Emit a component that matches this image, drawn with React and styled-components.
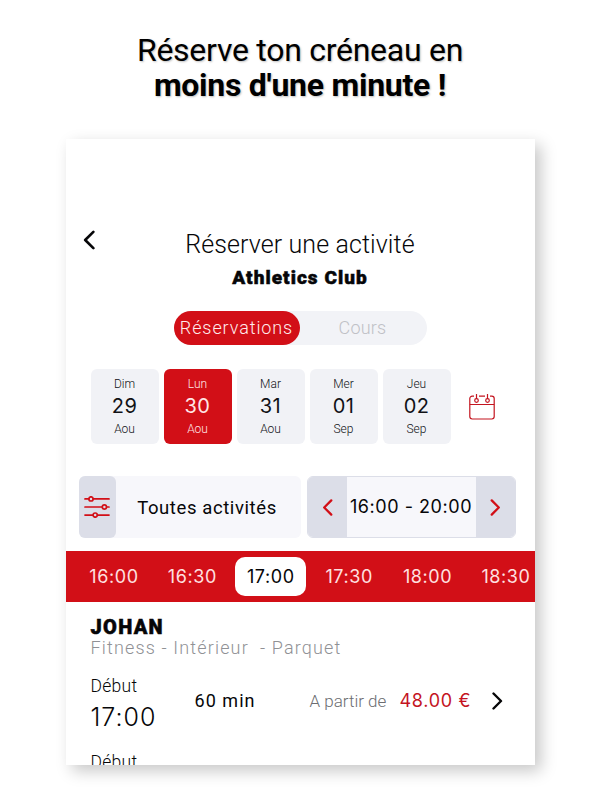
import { useState } from 'react'
import styled, { createGlobalStyle } from 'styled-components'

const GlobalStyle = createGlobalStyle`
    * {
        box-sizing: border-box;
    }

    body {
        margin: 0;
        background: #fff;
        color: #060608;
        font-family: Roboto, "Liberation Sans", sans-serif;
    }

    button {
        padding: 0;
        border: none;
        background: none;
        font: inherit;
        color: inherit;
    }
`

const Page = styled.div`
    width: 600px;
    height: 800px;
    overflow: hidden;

    display: flex;
    flex-direction: column;
    align-items: center;
`

const Slogan = styled.h1`
    height: 139px;
    margin: 0;
    padding-top: 32px;

    font-size: 32px;
    font-weight: 400;
    line-height: 36px;
    letter-spacing: -0.27px;
    text-align: center;
    white-space: nowrap;
    color: #000;
    text-shadow: 1px 1px 2px rgba(0, 0, 0, 0.25);
`

const SloganStrong = styled.strong`
    display: block;
    font-weight: 700;
    line-height: 35px;
`

const Screen = styled.main`
    width: 469px;
    height: 626px;
    overflow: hidden;

    display: flex;
    flex-direction: column;

    background: #fff;
    box-shadow: 6px 6px 15px rgba(0, 0, 0, 0.22);
`

const Header = styled.header`
    height: 172px;
    flex: none;
    padding-top: 90px;

    display: grid;
    grid-template-columns: 47px 1fr 47px;
    align-items: start;
    justify-items: center;
`

const BackButton = styled.button`
    height: 22px;
    display: flex;
    align-items: center;
`

const Titles = styled.div`
    display: flex;
    flex-direction: column;
    align-items: center;
    white-space: nowrap;
`

const Label = styled.span`
    font-family: ${p => (p.$digits ? 'Inter, ' : '')}Roboto, sans-serif;
    font-size: ${p => p.$size}px;
    font-weight: ${p => p.$weight || 400};
    line-height: ${p => p.$line || 20}px;
    letter-spacing: ${p => p.$track || 0}px;
    color: ${p => p.$color || 'inherit'};
    -webkit-text-stroke: ${p => (p.$weight === 900 ? '0.5px' : '0')};
    white-space: pre;
`

const Toggle = styled.div`
    width: 253px;
    height: 34px;
    flex: none;
    align-self: center;

    display: flex;

    border-radius: 17px;
    background: #f2f3f7;
`

const ToggleOption = styled.button`
    width: 126px;
    height: 34px;

    border-radius: 17px;
    background: ${p => (p.$active ? '#d20f17' : 'transparent')};
    color: ${p => (p.$active ? '#ffecec' : '#c0c1c6')};
`

const Days = styled.div`
    height: 75px;
    flex: none;
    margin-top: 24px;
    padding-left: 25px;

    display: flex;
    align-items: center;
    gap: 5px;
`

const Day = styled.button`
    width: 68px;
    height: 75px;
    padding-top: 5px;

    display: flex;
    flex-direction: column;
    align-items: center;

    border-radius: 6px;
    background: ${p => (p.$active ? '#d20f17' : '#f1f2f6')};
    color: ${p => (p.$active ? '#ffe6e6' : '#111216')};
`

const CalendarButton = styled.button`
    margin-left: 13px;
    display: flex;
`

const Filters = styled.div`
    height: 62px;
    flex: none;
    margin: 32px 19px 0 13px;

    display: flex;
    gap: 6px;
`

const Activity = styled.div`
    width: 222px;
    display: flex;
    border-radius: 6px;
    background: #f7f7fb;
`

const ActivityIcon = styled.button`
    width: 37px;
    display: flex;
    align-items: center;
    justify-content: center;
    border-radius: 6px;
    background: #dcdee8;
`

const ActivityName = styled.div`
    flex: 1;
    padding: 1px 2px 0 0;
    display: flex;
    align-items: center;
    justify-content: center;
`

const Range = styled.div`
    width: 209px;
    overflow: hidden;
    display: flex;
    border: 1px solid #dcdee8;
    border-radius: 6px;
    background: #f7f7fb;
`

const RangeStep = styled.button`
    width: 39px;
    display: flex;
    align-items: center;
    justify-content: center;
    background: #dcdee8;
`

const RangeValue = styled.div`
    flex: 1;
    display: flex;
    align-items: center;
    justify-content: center;
`

const Hours = styled.div`
    height: 51px;
    flex: none;
    margin-top: 13px;
    padding-left: 13px;

    display: flex;
    align-items: center;
    gap: 7.4px;

    background: #d20f17;
`

const Hour = styled.button`
    width: 71px;
    height: 39px;
    flex: none;

    border-radius: 10px;
    background: ${p => (p.$active ? '#fff' : 'transparent')};
    color: ${p => (p.$active ? '#060608' : '#ffe0e0')};
`

const Court = styled.section`
    padding: 14px 0 0 25px;
    display: flex;
    flex-direction: column;
`

const Slots = styled.section`
    padding: 13px 0 0 25px;
`

const Slot = styled.div`
    height: 76px;
    display: grid;
    grid-template-columns: 104px 115px 90px 92px 20px;
    align-items: start;
`

const SlotStart = styled.div`
    display: flex;
    flex-direction: column;
`

const SlotCell = styled.div`
    height: 24px;
    margin-top: 18px;
    display: flex;
    align-items: center;
`

const Chevron = ({ left, color, width = 11, height = 18, stroke = 2.4 }) => (
    <svg width={width} height={height} viewBox="0 0 11 18" fill="none">
        <path
            d={left ? 'M9.5 1.5 2 9l7.5 7.5' : 'M1.5 1.5 9 9l-7.5 7.5'}
            stroke={color}
            strokeWidth={stroke}
            strokeLinecap="round"
            strokeLinejoin="round"
        />
    </svg>
)

const CalendarIcon = () => (
    <svg width="26" height="28" viewBox="0 0 26 28" fill="none" stroke="#c4141f" strokeWidth="1.2">
        <path d="M5 3.2H3.2A2.4 2.4 0 0 0 .8 5.6v18a2.4 2.4 0 0 0 2.4 2.4h19.6a2.4 2.4 0 0 0 2.4-2.4v-18a2.4 2.4 0 0 0-2.4-2.4H21M10 3.2h6" />
        <path d="M.8 11.5h24.4M7.5 1v5M18.5 1v5" />
        <circle cx="7.5" cy="7.5" r="1.8" />
        <circle cx="18.5" cy="7.5" r="1.8" />
    </svg>
)

const SlidersIcon = () => (
    <svg width="26" height="22" viewBox="0 0 26 22" fill="none" stroke="#d20f17" strokeWidth="1.7" strokeLinecap="round">
        <path d="M1 2.9h3.7M9.3 2.9H25M1 11h17.1M22.7 11H25M1 19.1h7.9M13.5 19.1H25" />
        <circle cx="7" cy="2.9" r="2.1" />
        <circle cx="20.4" cy="11" r="2.1" />
        <circle cx="11.2" cy="19.1" r="2.1" />
    </svg>
)

const days = [
    { name: 'Dim', number: '29', month: 'Aou' },
    { name: 'Lun', number: '30', month: 'Aou' },
    { name: 'Mar', number: '31', month: 'Aou' },
    { name: 'Mer', number: '01', month: 'Sep' },
    { name: 'Jeu', number: '02', month: 'Sep' },
]

const hours = ['16:00', '16:30', '17:00', '17:30', '18:00', '18:30']

export default function App() {

    const [tab, setTab] = useState('Réservations')
    const [day, setDay] = useState('30')
    const [hour, setHour] = useState('17:00')

    return (
        <Page>
            <GlobalStyle />
            <Slogan>
                Réserve ton créneau en
                <SloganStrong>moins d'une minute !</SloganStrong>
            </Slogan>
            <Screen>
                <Header>
                    <BackButton aria-label="Retour">
                        <Chevron left color="#060608" width={12} height={20} />
                    </BackButton>
                    <Titles>
                        <Label $size={25} $weight={300} $line={31} $track={0.1}>Réserver une activité</Label>
                        <Label $size={19} $weight={900} $line={35} $track={1.05}>Athletics Club</Label>
                    </Titles>
                </Header>
                <Toggle>
                    {['Réservations', 'Cours'].map(name => (
                        <ToggleOption key={name} $active={tab === name} onClick={() => setTab(name)}>
                            <Label $size={18} $weight={350} $track={name === 'Cours' ? 0.2 : 0.9}>{name}</Label>
                        </ToggleOption>
                    ))}
                </Toggle>
                <Days>
                    {days.map(d => (
                        <Day key={d.number} $active={day === d.number} onClick={() => setDay(d.number)}>
                            <Label $size={12} $weight={300}>{d.name}</Label>
                            <Label $digits $size={20} $line={25} $track={0.4}>{d.number}</Label>
                            <Label $size={12} $weight={300}>{d.month}</Label>
                        </Day>
                    ))}
                    <CalendarButton aria-label="Calendrier">
                        <CalendarIcon />
                    </CalendarButton>
                </Days>
                <Filters>
                    <Activity>
                        <ActivityIcon aria-label="Filtres">
                            <SlidersIcon />
                        </ActivityIcon>
                        <ActivityName>
                            <Label $size={18.5} $track={0.6}>Toutes activités</Label>
                        </ActivityName>
                    </Activity>
                    <Range>
                        <RangeStep aria-label="Avant">
                            <Chevron left color="#d20f17" width={11} height={17} />
                        </RangeStep>
                        <RangeValue>
                            <Label $digits $size={18} $track={0.55}>16:00 - 20:00</Label>
                        </RangeValue>
                        <RangeStep aria-label="Après">
                            <Chevron color="#d20f17" width={11} height={17} />
                        </RangeStep>
                    </Range>
                </Filters>
                <Hours>
                    {hours.map(h => (
                        <Hour key={h} $active={hour === h} onClick={() => setHour(h)}>
                            <Label $digits $size={18} $track={0.6}>{h}</Label>
                        </Hour>
                    ))}
                </Hours>
                <Court>
                    <Label $size={20} $weight={900} $line={22} $track={1.3}>JOHAN</Label>
                    <Label $size={18} $weight={350} $track={1.15} $color="#909195">Fitness - Intérieur  - Parquet</Label>
                </Court>
                <Slots>
                    <Slot>
                        <SlotStart>
                            <Label $size={17.5} $weight={300} $line={30} $track={0.3}>Début</Label>
                            <Label $digits $size={25} $weight={350} $line={33} $track={1}>17:00</Label>
                        </SlotStart>
                        <SlotCell>
                            <Label $size={18} $track={1.05}>60 min</Label>
                        </SlotCell>
                        <SlotCell>
                            <Label $size={17} $weight={300} $color="#6c6d71">A partir de</Label>
                        </SlotCell>
                        <SlotCell>
                            <Label $digits $size={18} $track={0.7} $color="#c4141f">48.00 €</Label>
                        </SlotCell>
                        <SlotCell>
                            <Chevron color="#060608" />
                        </SlotCell>
                    </Slot>
                    <Slot>
                        <Label $size={17.5} $weight={300} $line={30} $track={0.3}>Début</Label>
                    </Slot>
                </Slots>
            </Screen>
        </Page>
    )
}
